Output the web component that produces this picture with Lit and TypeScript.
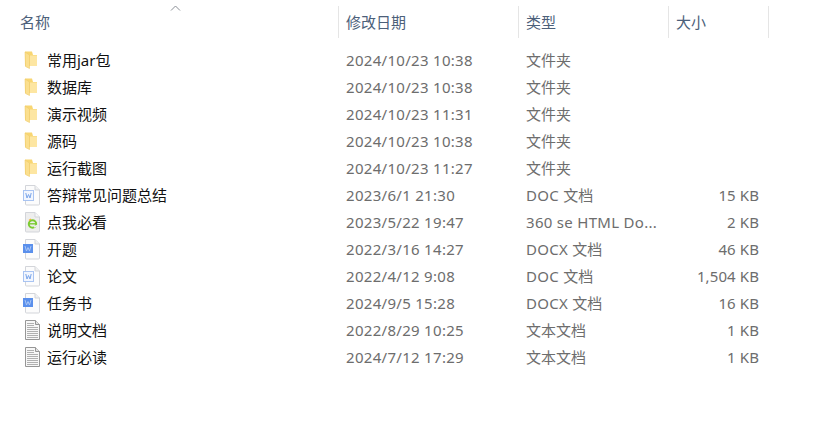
import { LitElement, html, css, svg } from "lit";
import { customElement } from "lit/decorators.js";

type Kind = "folder" | "doc" | "docx" | "html" | "txt";
const rows: [Kind, string, string, string, string][] = [
  ["folder", "常用jar包", "2024/10/23 10:38", "文件夹", ""],
  ["folder", "数据库", "2024/10/23 10:38", "文件夹", ""],
  ["folder", "演示视频", "2024/10/23 11:31", "文件夹", ""],
  ["folder", "源码", "2024/10/23 10:38", "文件夹", ""],
  ["folder", "运行截图", "2024/10/23 11:27", "文件夹", ""],
  ["doc", "答辩常见问题总结", "2023/6/1 21:30", "DOC 文档", "15 KB"],
  ["html", "点我必看", "2023/5/22 19:47", "360 se HTML Do...", "2 KB"],
  ["docx", "开题", "2022/3/16 14:27", "DOCX 文档", "46 KB"],
  ["doc", "论文", "2022/4/12 9:08", "DOC 文档", "1,504 KB"],
  ["docx", "任务书", "2024/9/5 15:28", "DOCX 文档", "16 KB"],
  ["txt", "说明文档", "2022/8/29 10:25", "文本文档", "1 KB"],
  ["txt", "运行必读", "2024/7/12 17:29", "文本文档", "1 KB"],
];

const page = svg`<path d="M6.500 1.500H16L20.500 6V20A1 1 0 0 1 19.500 21H7.500A1 1 0 0 1 6.500 20Z" fill="#fcfcfc" stroke="#d3d5da"/><path d="M16 1.500V6H20.500" fill="#f1f1f1" stroke="#d3d5da"/>`;

function icon(k: Kind) {
  let body;
  if (k === "folder") {
    body = svg`<path d="M6 2.500H13L14 6H18V17H6Z" fill="#f8d672"/><path d="M11 6.500H18V17H11Z" fill="#fde6a2"/><path d="M6 3L10.500 6V19.500L6.500 17.500Z" fill="#fbdf8e" stroke="#efcb6c" stroke-width=".6"/>`;
  } else if (k === "doc") {
    body = svg`${page}<rect x="4.500" y="6.500" width="10" height="10" fill="#f2f6fe" stroke="#a9c4f2"/><path d="M6.800 9L8 14L9.500 10.500L11 14L12.200 9" fill="none" stroke="#7ba6ea" stroke-width="1"/>`;
  } else if (k === "docx") {
    body = svg`${page}<rect x="4" y="6" width="10" height="9" fill="#5b90ec"/><path d="M6 8L7.500 13L9 9.500L10.500 13L12 8" fill="none" stroke="#a9c6f6" stroke-width="1"/>`;
  } else if (k === "html") {
    body = svg`<path d="M6.500 1.500H16L20.500 6V20A1 1 0 0 1 19.500 21H7.500A1 1 0 0 1 6.500 20Z" fill="#eeeeee" stroke="#d3d5da"/><path d="M16 1.500V6H20.500" fill="#f8f8f8" stroke="#d3d5da"/><circle cx="13.500" cy="13" r="3.700" fill="none" stroke="#7ccb33" stroke-width="2"/><path d="M10 12.800H17" stroke="#7ccb33" stroke-width="1.400"/><path d="M15 16L18 14.500" stroke="#eee" stroke-width="1.400"/><path d="M10 9.500L12 8" stroke="#f2b32f" stroke-width="1.300"/>`;
  } else {
    body = svg`<path d="M6.500 1.500H16.500L20.500 5.500V20.500H6.500Z" fill="#f7f7f7" stroke="#969696"/><path d="M16.500 1.500V5.500H20.500" fill="#e2e2e2" stroke="#969696"/><path d="M8 4.500H15M8 6.500H15M8 8.500H19M8 10.500H19M8 12.500H19M8 14.500H19M8 16.500H19M8 18.500H19" stroke="#b0b0b0"/>`;
  }
  return html`<svg class="icon" width="24" height="22" viewBox="0 0 24 22">${body}</svg>`;
}

/* CJK runs are wrapped so that only Latin text takes the tracking. */
function typeText(t: string) {
  return t
    .split(/([\u4e00-\u9fff]+)/)
    .map((p) => (/[\u4e00-\u9fff]/.test(p) ? html`<span class="cjk">${p}</span>` : p));
}

@customElement("app-root")
export class AppRoot extends LitElement {
  static styles = css`
    :host {
      display: block;
      width: 824px;
      height: 448px;
      background: #fff;
      overflow: hidden;
      font-family: "Noto Sans", "Noto Sans CJK SC", sans-serif;
      font-size: 15px;
      position: relative;
    }
    .head,
    .row {
      display: grid;
      grid-template-columns: 339px 180px 150px 100px;
    }
    .head {
      padding-top: 6px;
      height: 33px;
      color: #4c607a;
    }
    .hc {
      display: flex;
      align-items: center;
      padding-left: 7px;
      padding-bottom: 1px;
      border-right: 1px solid #e5e5e5;
      height: 32px;
      box-sizing: border-box;
    }
    .hc:first-child {
      padding-left: 20px;
    }
    .list {
      padding-top: 8px;
    }
    .row {
      height: 27px;
      align-items: center;
      color: #6d6d6d;
      white-space: nowrap;
      line-height: 20px;
    }
    .name {
      display: flex;
      align-items: center;
      color: #111;
      padding-left: 19px;
      gap: 4px;
    }
    .icon {
      flex: none;
      margin-top: -2px;
    }
    .name span,
    .date,
    .type,
    .size {
      padding-bottom: 1px;
    }
    .date,
    .type {
      padding-left: 7px;
      letter-spacing: 0.3px;
    }
    .cjk {
      letter-spacing: 0;
    }
    .size {
      text-align: right;
      padding-right: 10px;
      letter-spacing: 0.1px;
    }
    .sort {
      position: absolute;
      left: 170px;
      top: 5px;
    }
  `;

  render() {
    return html`
      <svg class="sort" width="11" height="7" viewBox="0 0 11 7">
        <path d="M1 5.500L5.500 1L10 5.500" fill="none" stroke="#8a8f96" />
      </svg>
      <div class="head">
        <div class="hc">名称</div>
        <div class="hc">修改日期</div>
        <div class="hc">类型</div>
        <div class="hc">大小</div>
      </div>
      <div class="list">
        ${rows.map(
          ([k, n, d, t, s]) => html`<div class="row">
            <div class="name">${icon(k)}<span>${n}</span></div>
            <div class="date">${d}</div>
            <div class="type">${typeText(t)}</div>
            <div class="size">${s}</div>
          </div>`
        )}
      </div>
    `;
  }
}
